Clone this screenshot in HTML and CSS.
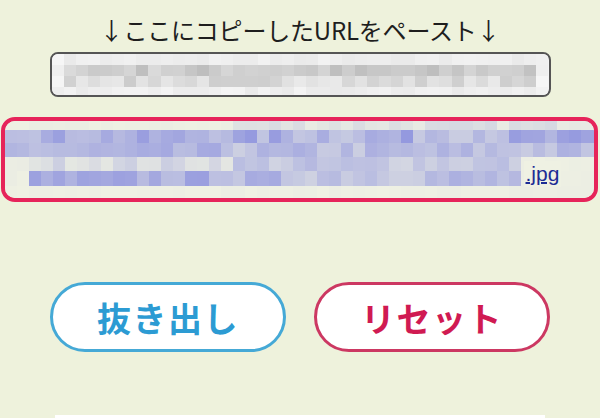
FILE: index.html
```html
<!DOCTYPE html>
<html>
    <head>
        <meta charset="utf-8">
        <title>URL抜き出し</title>
        <link rel="stylesheet" href="styles.css">
    </head>
    <body>
        <div id="page">
            <p class="lead">↓ここにコピーしたURLをペースト↓</p>
            <div class="url-input">
                <div class="mosaic" id="url-mosaic"></div>
            </div>
            <div class="result">
                <div class="mosaic" id="result-mosaic"></div>
                <a class="ext" href="#">.jpg</a>
            </div>
            <div class="buttons">
                <button class="btn btn-extract">抜き出し</button>
                <button class="btn btn-reset">リセット</button>
            </div>
            <div class="strip"></div>
        </div>
        <script src="script.js"></script>
    </body>
</html>
```

FILE: styles.css
```css
html, body{
    margin: 0;
    padding: 0;
    height: 100%;
    overflow: hidden;
}
body{
    background-color: #eef2dc;
    font-family: "Noto Sans CJK JP", "Noto Sans", sans-serif;
}
#page{
    display: flex;
    flex-direction: column;
    align-items: center;
}
.lead{
    margin: 15px 0 7px;
    font-size: 24px;
    line-height: 30px;
    font-weight: 400;
    color: #1e1e1e;
    letter-spacing: -0.2px;
}
.url-input{
    box-sizing: border-box;
    width: 501px;
    height: 45px;
    border: 2px solid #555;
    border-radius: 8px;
    background: #f4f4f4;
    overflow: hidden;
}
.mosaic{
    display: grid;
    width: 100%;
    height: 100%;
}
#url-mosaic{
    grid-template-columns: repeat(41, 1fr);
    grid-template-rows: 11px 11px 11px 8px;
}
.result{
    position: relative;
    box-sizing: border-box;
    width: 597px;
    height: 85px;
    margin-top: 20px;
    margin-left: -2px;
    border: 4px solid #e6245a;
    border-radius: 14px;
    background: #eff1e3;
    overflow: hidden;
}
#result-mosaic{
    grid-template-columns: repeat(49, 1fr);
    grid-template-rows: 9px 13px 14px 14px 15px 12px;
}
.ext{
    position: absolute;
    left: 519px;
    top: 40px;
    padding: 0 2px;
    background: #eff1e3;
    font-family: "Liberation Sans", Arial, sans-serif;
    font-size: 21px;
    line-height: 26px;
    color: #1d2c95;
    text-decoration: underline;
    text-underline-offset: 1px;
}
.buttons{
    display: flex;
    gap: 28px;
    margin-top: 80px;
}
.btn{
    box-sizing: border-box;
    width: 236px;
    height: 70px;
    border-radius: 35px;
    background: #fff;
    font-family: "Noto Sans CJK JP", sans-serif;
    font-size: 34px;
    font-weight: 700;
    letter-spacing: 1.5px;
    cursor: pointer;
}
.btn-extract{
    border: 3px solid #45a9d6;
    color: #2c9bd3;
}
.btn-reset{
    border: 3px solid #cc3862;
    color: #d01a52;
}
.strip{
    width: 490px;
    height: 3px;
    margin-top: 63px;
    background: #fff;
}
```

FILE: script.js
```js
// pixelated (blurred) URLs, drawn as blocks
let seed = 7;
function rand() {
    seed = (seed * 16807) % 2147483647;
    return seed / 2147483647;
}
function mix(a, b, t) {
    return a.map((v, i) => Math.round(v + (b[i] - v) * t));
}
function fill(el, cols, rows, pick) {
    for (let r = 0; r < rows; r++) {
        for (let c = 0; c < cols; c++) {
            let cell = document.createElement("div");
            let rgb = pick(r, c);
            cell.style.background = `rgb(${rgb.join(",")})`;
            el.appendChild(cell);
        }
    }
}

let grayRows = [[0.03, 0.12], [0.25, 0.55], [0.12, 0.4], [0.02, 0.12]];
fill(document.getElementById("url-mosaic"), 41, 4, (r, c) => {
    let [lo, hi] = grayRows[r];
    if (c == 0 || c == 40) { lo = 0; hi = 0.08; }
    let t = lo + (hi - lo) * rand();
    return mix([246, 246, 246], [140, 140, 140], t);
});

let cream = [239, 241, 227];
let blue = [132, 137, 222];
let leftRows = [[0, 0.04], [0.45, 0.8], [0.35, 0.7], [0.1, 0.35], [0.45, 0.8], [0, 0.03]];
let rightRows = [[0.05, 0.25], [0.35, 0.85], [0.3, 0.65], [0.25, 0.55], [0.3, 0.7], [0, 0.03]];
fill(document.getElementById("result-mosaic"), 49, 6, (r, c) => {
    let [lo, hi] = c < 19 ? leftRows[r] : rightRows[r];
    if (r >= 3 && c < 2) { lo = 0; hi = 0.05; }
    if (r >= 3 && c > 42) { lo = 0; hi = 0.03; }
    let t = lo + (hi - lo) * rand();
    return mix(cream, blue, t);
});
```
